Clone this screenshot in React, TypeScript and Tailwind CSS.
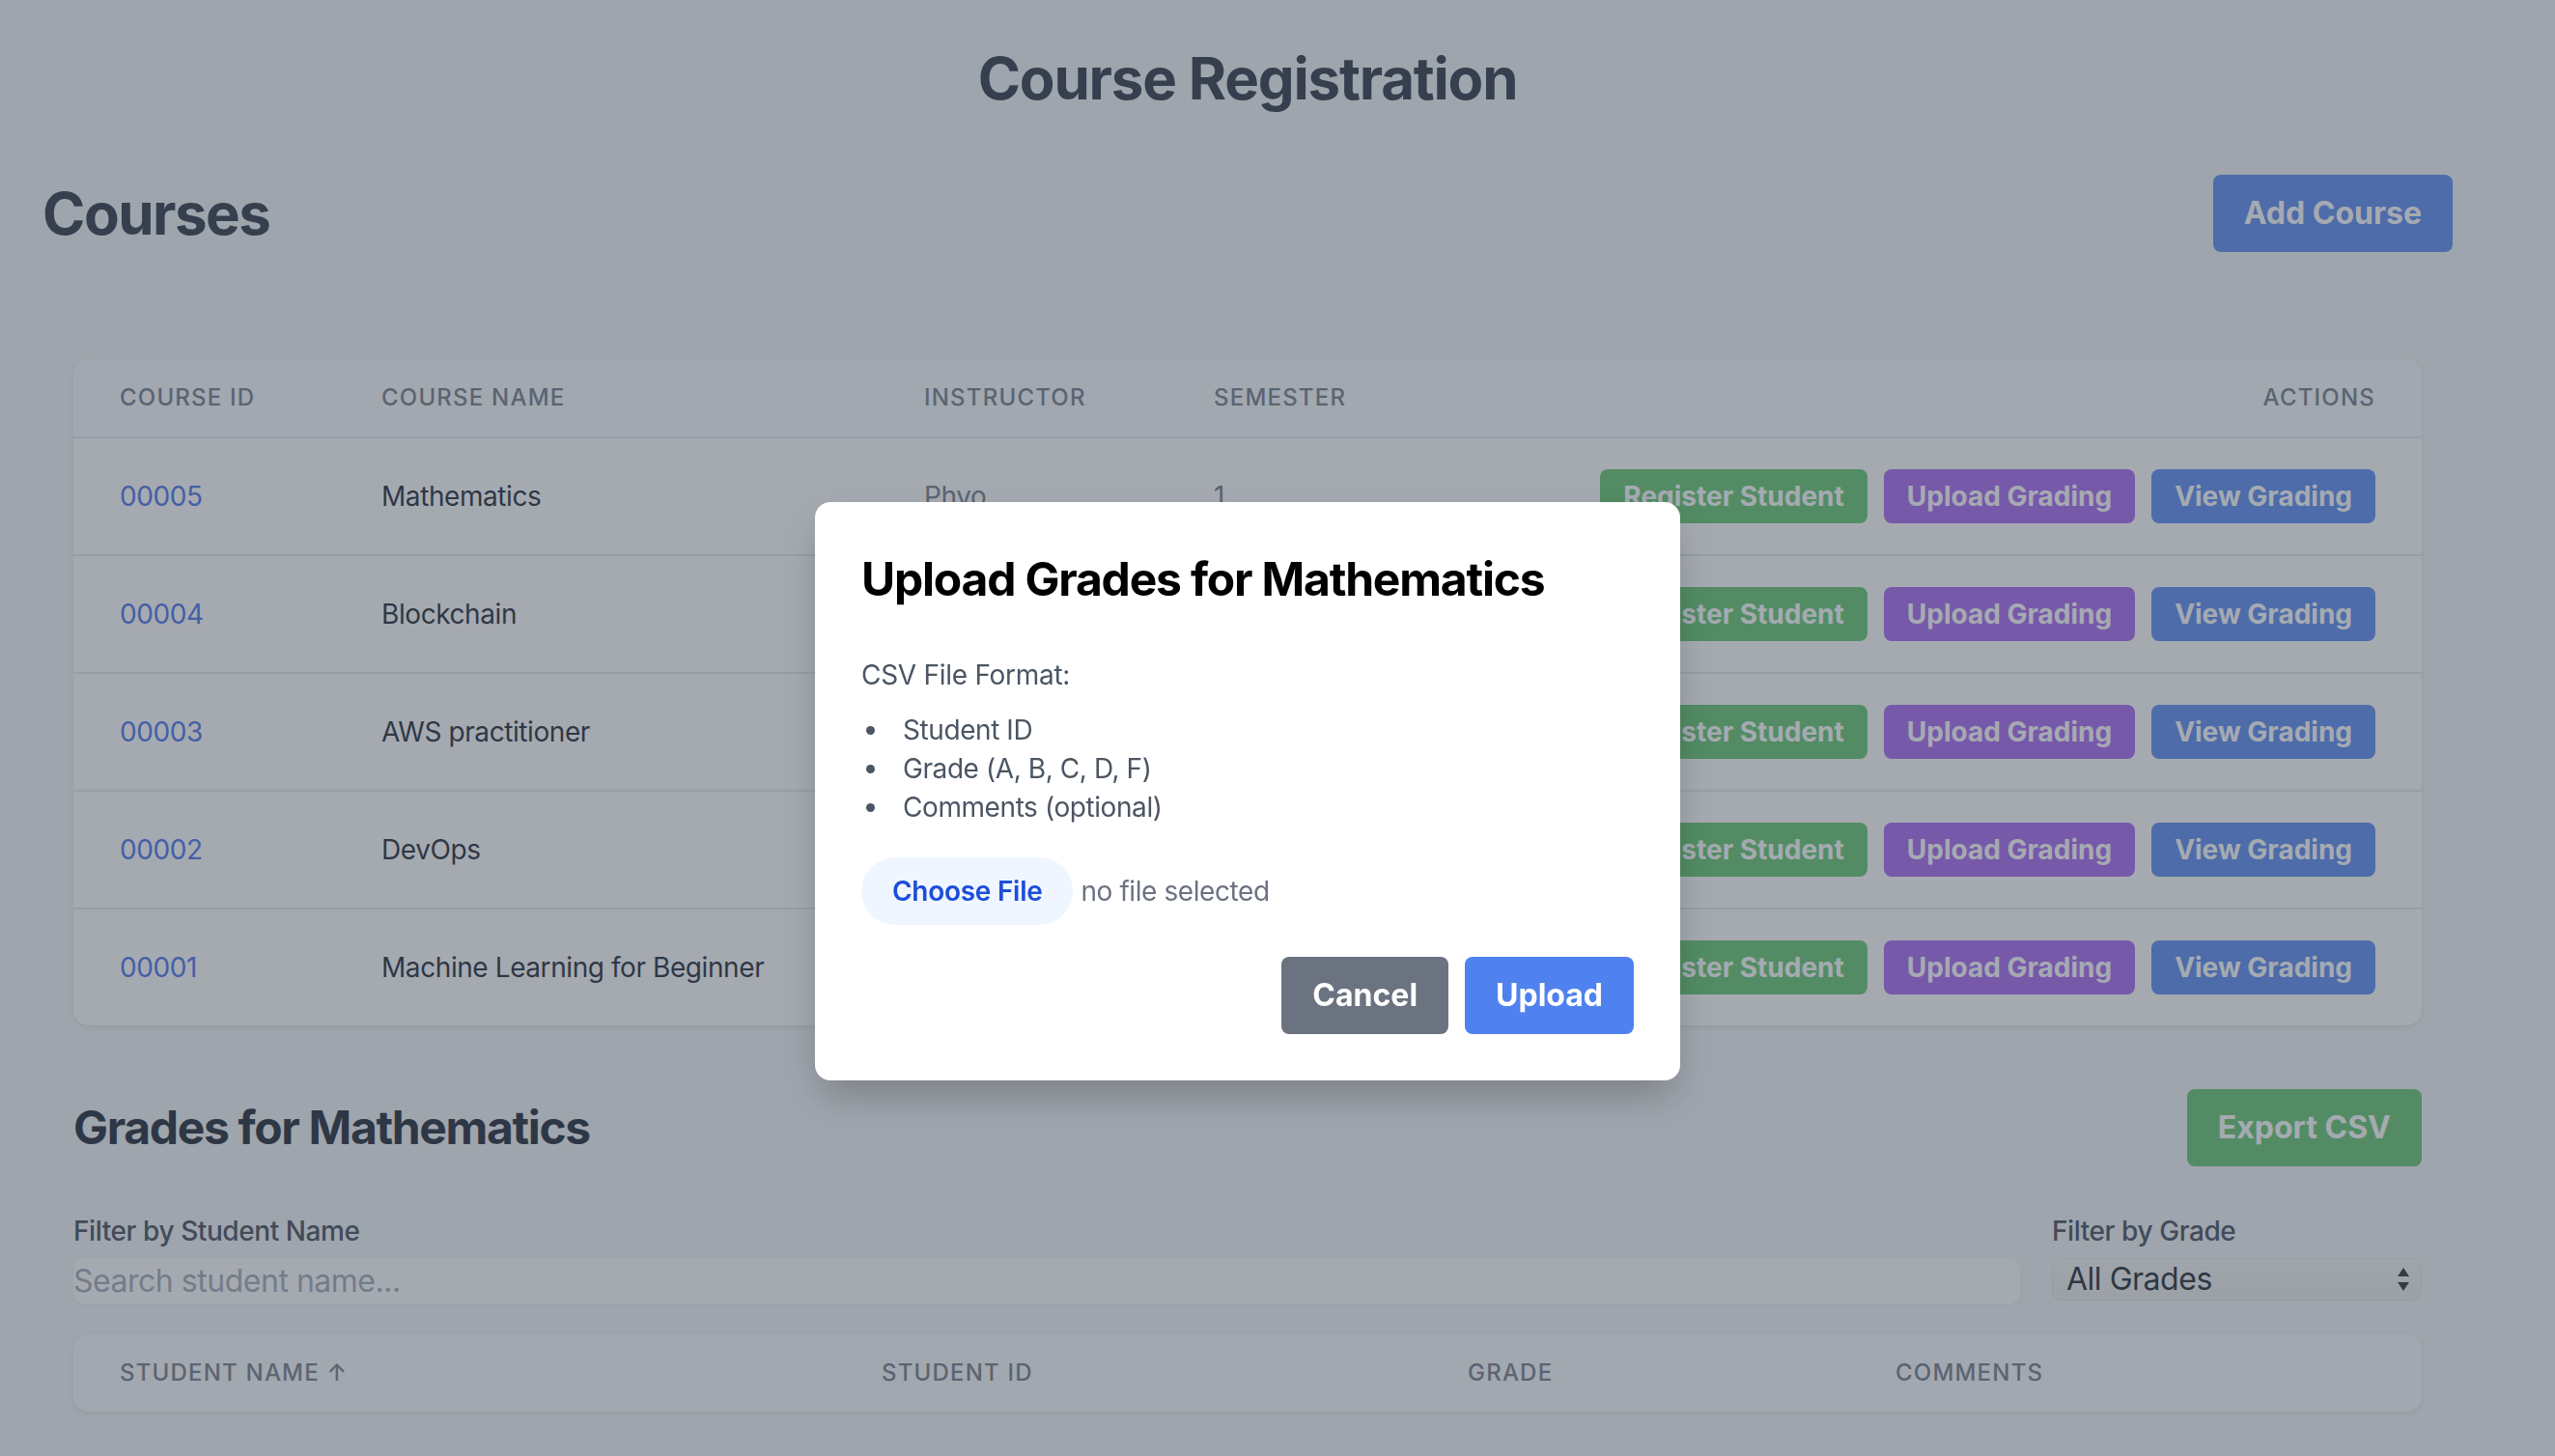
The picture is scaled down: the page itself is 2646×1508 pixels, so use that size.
import React from 'react';

interface Course {
  id: string;
  name: string;
  instructor: string;
  semester: string;
}

// rows 2-5 sit under the dialog, only the first row's instructor shows
const courses: Course[] = [
  { id: '00005', name: 'Mathematics', instructor: 'Phyo', semester: '1' },
  { id: '00004', name: 'Blockchain', instructor: '', semester: '' },
  { id: '00003', name: 'AWS practitioner', instructor: '', semester: '' },
  { id: '00002', name: 'DevOps', instructor: '', semester: '' },
  { id: '00001', name: 'Machine Learning for Beginner', instructor: '', semester: '' },
];

const thClass = 'px-[48px] py-[24px] text-left text-[24px] leading-[32px] font-medium uppercase tracking-[0.05em] text-[#6b7280]';
const tdClass = 'px-[48px] py-[32px] text-[28px] leading-[40px] tracking-[-0.015em]';

function ActionButtons() {
  return (
    <div className="flex justify-end gap-[17px]">
      <button className="rounded-[8px] bg-[#5ac364] px-[24px] py-[8px] text-[28px] leading-[40px] font-bold text-white">
        Register Student
      </button>
      <button className="rounded-[8px] bg-[#a35cf0] px-[24px] py-[8px] text-[28px] leading-[40px] font-bold text-white">
        Upload Grading
      </button>
      <button className="rounded-[8px] bg-[#4f82ee] px-[24px] py-[8px] text-[28px] leading-[40px] font-bold text-white">
        View Grading
      </button>
    </div>
  );
}

function UploadModal() {
  return (
    <div className="fixed inset-0 bg-[#4b5563]/50">
      <div className="flex justify-center pt-[520px] pr-[62px]">
        <div className="w-[896px] rounded-[16px] bg-white p-[48px] shadow-[0_20px_40px_-8px_rgba(0,0,0,0.25)]">
          <h3 className="text-[48px] leading-[64px] font-bold tracking-[-0.025em] text-black">Upload Grades for Mathematics</h3>
          <p className="mt-[47px] text-[28px] leading-[40px] tracking-[-0.01em] text-[#4b5563]">CSV File Format:</p>
          <ul className="mt-[17px] list-disc list-inside pl-[5px] text-[28px] leading-[40px] tracking-[-0.015em] text-[#4b5563]">
            <li>Student ID</li>
            <li>Grade (A, B, C, D, F)</li>
            <li>Comments (optional)</li>
          </ul>
          <label className="mt-[32px] flex items-center">
            <input type="file" accept=".csv" className="hidden" />
            <span className="rounded-full bg-[#eff6ff] px-[32px] py-[15px] text-[28px] leading-[40px] font-semibold tracking-[-0.01em] text-[#1d4ed8]">
              Choose File
            </span>
            <span className="ml-[8px] text-[28px] leading-[40px] tracking-[-0.015em] text-[#6b7280]">no file selected</span>
          </label>
          <div className="mt-[33px] flex justify-end gap-[17px]">
            <button className="rounded-[8px] bg-[#6b7280] px-[32px] py-[16px] text-[32px] leading-[48px] font-bold text-white">
              Cancel
            </button>
            <button className="rounded-[8px] bg-[#4f82ee] px-[32px] py-[16px] text-[32px] leading-[48px] font-bold text-white">
              Upload
            </button>
          </div>
        </div>
      </div>
    </div>
  );
}

export default function App() {
  return (
    <div className="h-screen overflow-hidden bg-[#f3f4f6] font-['Inter','Liberation_Sans',sans-serif]">
      <h1 className="pt-[45px] pr-[62px] text-center text-[60px] leading-[72px] font-bold tracking-[-0.02em] text-[#1f2937]">
        Course Registration
      </h1>

      <div className="mt-[64px] flex items-center justify-between pl-[44px] pr-[106px]">
        <h2 className="text-[60px] leading-[72px] font-bold tracking-[-0.025em] text-[#1f2937]">Courses</h2>
        <button className="rounded-[8px] bg-[#4f82ee] px-[32px] py-[16px] text-[32px] leading-[48px] font-bold text-white">
          Add Course
        </button>
      </div>

      <div className="ml-[76px] mr-[138px] mt-[111px]">
        <div className="overflow-hidden rounded-[16px] bg-white shadow-[0_2px_6px_rgba(0,0,0,0.08)]">
          <table className="w-full table-fixed">
            <colgroup>
              <col className="w-[271px]" />
              <col className="w-[562px]" />
              <col className="w-[300px]" />
              <col className="w-[397px]" />
              <col />
            </colgroup>
            <thead className="border-b-2 border-[#e5e7eb] bg-[#f9fafb]">
              <tr>
                <th className={thClass}>Course ID</th>
                <th className={thClass}>Course Name</th>
                <th className={thClass}>Instructor</th>
                <th className={thClass}>Semester</th>
                <th className={thClass + ' text-right'}>Actions</th>
              </tr>
            </thead>
            <tbody className="divide-y-2 divide-[#e5e7eb]">
              {courses.map((c) => (
                <tr key={c.id}>
                  <td className={tdClass + ' text-[#3d68e6]'}>{c.id}</td>
                  <td className={tdClass + ' text-[#111827]'}>{c.name}</td>
                  <td className={tdClass + ' text-[#6b7280]'}>{c.instructor}</td>
                  <td className={tdClass + ' text-[#6b7280]'}>{c.semester}</td>
                  <td className="px-[48px] py-[32px]">
                    <ActionButtons />
                  </td>
                </tr>
              ))}
            </tbody>
          </table>
        </div>

        <div className="mt-[66px] flex items-center justify-between">
          <h2 className="text-[48px] leading-[64px] font-bold tracking-[-0.028em] text-[#111827]">Grades for Mathematics</h2>
          <button className="rounded-[8px] bg-[#5ac364] px-[32px] py-[16px] text-[32px] leading-[48px] font-bold text-white">
            Export CSV
          </button>
        </div>

        <div className="mt-[47px] flex gap-[33px]">
          <div className="flex-1">
            <label className="block text-[28px] leading-[40px] font-medium tracking-[-0.015em] text-[#374151]">Filter by Student Name</label>
            <input
              type="text"
              placeholder="Search student name..."
              className="mt-[8px] block h-[48px] w-full rounded-[12px] bg-white text-[32px] tracking-[-0.015em] shadow-[0_1px_2px_rgba(0,0,0,0.06)] outline-none placeholder:text-[#9ca3af]"
            />
          </div>
          <div className="w-[383px]">
            <label className="block text-[28px] leading-[40px] font-medium tracking-[-0.015em] text-[#374151]">Filter by Grade</label>
            <div className="mt-[8px] flex h-[44px] items-center justify-between rounded-[10px] bg-gradient-to-b from-[#f5f5f5] to-[#ececec] pl-[15px] pr-[12px] shadow-[inset_0_0_0_1px_rgba(0,0,0,0.05)]">
              <span className="text-[32px] leading-[44px] tracking-[-0.015em] text-[#111827]">All Grades</span>
              <svg width="14" height="28" viewBox="0 0 14 28" fill="#222">
                <path d="M7 2 L13 11 L1 11 Z" />
                <path d="M1 17 L13 17 L7 26 Z" />
              </svg>
            </div>
          </div>
        </div>

        <div className="mt-[31px] overflow-hidden rounded-[16px] bg-white shadow-[0_2px_6px_rgba(0,0,0,0.08)]">
          <table className="w-full table-fixed">
            <colgroup>
              <col className="w-[789px]" />
              <col className="w-[607px]" />
              <col className="w-[443px]" />
              <col />
            </colgroup>
            <thead className="bg-[#f9fafb]">
              <tr>
                <th className={thClass}>Student Name ↑</th>
                <th className={thClass}>Student ID</th>
                <th className={thClass}>Grade</th>
                <th className={thClass}>Comments</th>
              </tr>
            </thead>
          </table>
        </div>
      </div>

      <UploadModal />
    </div>
  );
}
